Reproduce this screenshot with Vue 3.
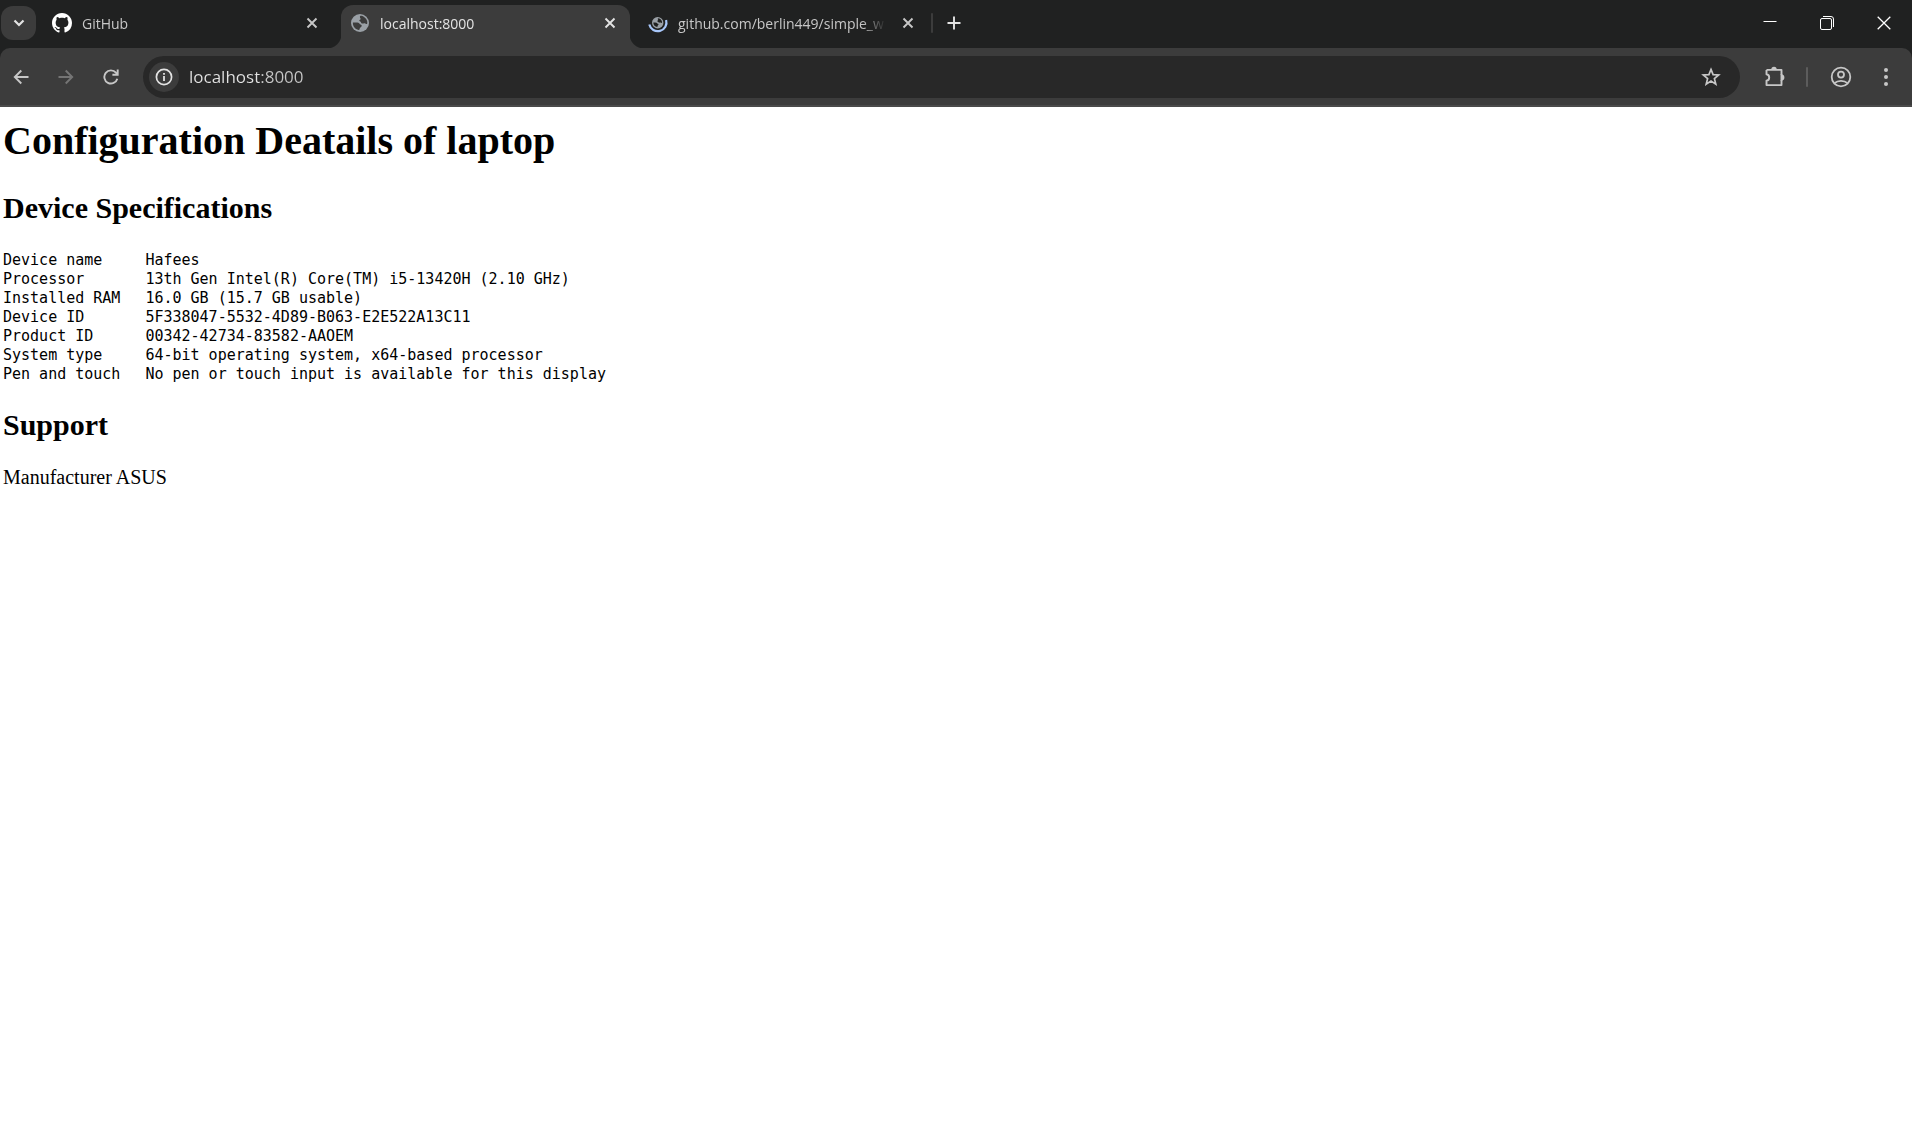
<script setup>
import { ref } from 'vue'

const address = ref('localhost:8000')

const tabs = [
  { title: 'GitHub', icon: 'github', active: false },
  { title: 'localhost:8000', icon: 'globe', active: true },
  { title: 'github.com/berlin449/simple_w', icon: 'loading', active: false },
]

const specs = [
  ['Device name', 'Hafees'],
  ['Processor', '13th Gen Intel(R) Core(TM) i5-13420H (2.10 GHz)'],
  ['Installed RAM', '16.0 GB (15.7 GB usable)'],
  ['Device ID', '5F338047-5532-4D89-B063-E2E522A13C11'],
  ['Product ID', '00342-42734-83582-AAOEM'],
  ['System type', '64-bit operating system, x64-based processor'],
  ['Pen and touch', 'No pen or touch input is available for this display'],
]
</script>

<template>
  <div class="browser">
    <header class="chrome">
      <div class="strip">
        <button class="search-tabs" aria-label="Search tabs">
          <svg width="12" height="8" viewBox="0 0 12 8"><path d="M1.5 1.5 6 6l4.5-4.5" fill="none" stroke="#e3e3e3" stroke-width="2.2" /></svg>
        </button>

        <div class="tabs">
          <div v-for="tab in tabs" :key="tab.title" class="tab" :class="{ active: tab.active }">
            <svg v-if="tab.icon === 'github'" width="20" height="20" viewBox="0 0 16 16">
              <path fill="#fff" d="M8 0C3.58 0 0 3.58 0 8c0 3.54 2.29 6.53 5.47 7.59.4.07.55-.17.55-.38 0-.19-.01-.82-.01-1.49-2.01.37-2.53-.49-2.69-.94-.09-.23-.48-.94-.82-1.13-.28-.15-.68-.52-.01-.53.63-.01 1.08.58 1.23.82.72 1.21 1.87.87 2.33.66.07-.52.28-.87.51-1.07-1.78-.2-3.64-.89-3.64-3.95 0-.87.31-1.59.82-2.15-.08-.2-.36-1.02.08-2.12 0 0 .67-.21 2.2.82.64-.18 1.32-.27 2-.27s1.36.09 2 .27c1.53-1.04 2.2-.82 2.2-.82.44 1.1.16 1.92.08 2.12.51.56.82 1.27.82 2.15 0 3.07-1.87 3.75-3.65 3.95.29.25.54.73.54 1.48 0 1.07-.01 1.93-.01 2.2 0 .21.15.46.55.38A8.01 8.01 0 0 0 16 8c0-4.42-3.58-8-8-8z" />
            </svg>
            <svg v-else-if="tab.icon === 'globe'" width="20" height="20" viewBox="0 0 20 20">
              <circle cx="10" cy="10" r="9" fill="#9aa0a6" />
              <path fill="#3c3c3c" d="M10.500 2.800c2.500 0 5.600 2 6.600 5.200.3 1.200.2 2.300 0 2.900-1 .2-1.500-.6-2.400-.7-1.300-.2-1.600.6-2.800.3-1.200-.5-.6-1.900-2-2.200-.9-.2-.7-1.300.1-1.500.8-.5.8-1.200.2-1.900-.5-.7-.3-1.800.3-2.100zM2.900 9.600c1.800 0 4.300-.2 5.500.2 1.300.4 1.100 1.500 2.200 1.800 1.300.3 1.500 1.700.5 2.300-.9.600-1.400.7-1.300 1.700 0 .7-.4 1.600-1.200 1.500C5 16.300 2.600 13.200 2.900 9.600z" />
            </svg>
            <svg v-else width="20" height="20" viewBox="0 0 20 20" overflow="visible">
              <circle cx="9.700" cy="9.700" r="5.700" fill="#9aa0a6" />
              <path fill="#202121" d="M10 5.200c1.800 0 3.500 1.300 4 3.300l-.1 1.500c-.8-.1-1-.5-1.700-.5-.9.200-1.300.2-1.800-.2-.4-.5-.5-.8-1.100-1-.4-.3-.2-.8.500-.9.400-.4.500-.6 0-1.100-.2-.5-.1-.9.200-1.100zM5.300 9.500c1.500 0 2.800 0 3.400.3.500.6.700.8 1.300 1 .8.400.7 1-.1 1.500-.4.500-.3 1-.6 1.700-2.200-.1-4-2-4-4.500z" />
              <path fill="none" stroke="#a8c7fa" stroke-width="2.200" d="M1.300 11.500A8.700 8.700 0 1 0 18.100 7" />
            </svg>
            <span class="title">{{ tab.title }}</span>
            <button class="close" aria-label="Close tab">
              <svg width="12" height="12" viewBox="0 0 12 12"><path d="m1.500 1.500 9 9m0-9-9 9" stroke="currentColor" stroke-width="1.900" /></svg>
            </button>
          </div>
        </div>

        <span class="divider tab-divider"></span>
        <button class="new-tab" aria-label="New tab">
          <svg width="14" height="14" viewBox="0 0 14 14"><path d="M7 .5v13M.5 7h13" stroke="#e3e3e3" stroke-width="1.900" /></svg>
        </button>

        <div class="window-controls">
          <button aria-label="Minimize"><svg width="14" height="14" viewBox="0 0 14 14"><path d="M.5 5.500h13" stroke="#fff" /></svg></button>
          <button aria-label="Restore">
            <svg width="14" height="14" viewBox="0 0 14 14" fill="none" stroke="#fff"><rect x=".5" y="2.500" width="11" height="11" rx="1.500" /><path d="M3 .5h8A2.500 2.500 0 0 1 13.500 3v8" /></svg>
          </button>
          <button aria-label="Close"><svg width="14" height="14" viewBox="0 0 14 14"><path d="m.7.7 12.600 12.600m0-12.600L.7 13.300" stroke="#fff" stroke-width="1.300" /></svg></button>
        </div>
      </div>

      <div class="toolbar">
        <nav class="nav">
          <button aria-label="Back"><svg width="16" height="16" viewBox="0 0 16 16"><path d="M15.500 8H2M8.300 1.500 1.800 8l6.500 6.500" fill="none" stroke="#c7c7c7" stroke-width="1.900" /></svg></button>
          <button aria-label="Forward" disabled><svg width="16" height="16" viewBox="0 0 16 16"><path d="M.5 8H14M7.700 1.500 14.200 8l-6.500 6.500" fill="none" stroke="#757575" stroke-width="1.900" /></svg></button>
          <button aria-label="Reload"><svg width="16" height="16" viewBox="0 0 16 16"><path d="M14.300 9.700A6.600 6.600 0 1 1 13 3.700l1.700 1.800M14.700.5v5.300H9.400" fill="none" stroke="#c7c7c7" stroke-width="1.900" /></svg></button>
        </nav>

        <div class="omnibox">
          <button class="site-info" aria-label="View site information">
            <svg width="18" height="18" viewBox="0 0 18 18"><circle cx="9" cy="9" r="7.600" fill="none" stroke="#e3e3e3" stroke-width="1.700" /><path d="M9 8v5M9 5v1.800" stroke="#e3e3e3" stroke-width="1.800" /></svg>
          </button>
          <input v-model="address" type="text" aria-label="Address and search bar" spellcheck="false" />
          <button class="star" aria-label="Bookmark this tab">
            <svg width="20" height="20" viewBox="0 0 20 20"><path d="m10 2.400 2.100 5.200 5.600.4-4.300 3.600 1.400 5.500-4.800-3-4.800 3 1.400-5.500L2.300 8l5.600-.4z" fill="none" stroke="#c7c7c7" stroke-width="1.700" /></svg>
          </button>
        </div>

        <div class="actions">
          <button aria-label="Extensions">
            <svg width="22" height="22" viewBox="0 0 22 22"><path d="M2.500 3.900h15v4.800M2.500 3.900v4.300c3.600.4 3.600 6 0 6.400v4.500h15v-4.800" fill="none" stroke="#c7c7c7" stroke-width="1.900" stroke-linejoin="round" /><path d="M7.300 3.500a2.700 2.700 0 0 1 5.400 0zM17.500 8.500a2.900 2.900 0 0 1 0 5.800z" fill="#c7c7c7" /><path d="M17.500 8v7" stroke="#c7c7c7" stroke-width="1.900" /></svg>
          </button>
          <span class="divider"></span>
          <button aria-label="Profile">
            <svg width="22" height="22" viewBox="0 0 22 22" fill="none" stroke="#c7c7c7" stroke-width="1.800"><circle cx="11" cy="11" r="9.300" /><circle cx="11" cy="8.600" r="3" /><path d="M4.500 17.200c3.300-3.200 9.700-3.200 13 0" /></svg>
          </button>
          <button aria-label="Menu">
            <svg width="6" height="20" viewBox="0 0 6 20" fill="#c7c7c7"><circle cx="3" cy="3" r="2" /><circle cx="3" cy="10" r="2" /><circle cx="3" cy="17" r="2" /></svg>
          </button>
        </div>
      </div>
    </header>

    <main class="page">
      <h1>Configuration Deatails of laptop</h1>
      <h2>Device Specifications</h2>
      <table>
        <tbody>
          <tr v-for="[name, value] in specs" :key="name">
            <th scope="row">{{ name }}</th>
            <td>{{ value }}</td>
          </tr>
        </tbody>
      </table>
      <h2>Support</h2>
      <p>Manufacturer ASUS</p>
    </main>
  </div>
</template>

<style>
body {
  margin: 0;
  background: #fff;
}
</style>

<style scoped>
.browser {
  min-height: 100vh;
  background: #fff;
}

.chrome {
  background: #202121;
  font-family: "Open Sans", "Noto Sans", sans-serif;
}

button {
  display: flex;
  flex: none;
  align-items: center;
  justify-content: center;
  padding: 0;
  border: 0;
  background: none;
}

svg {
  display: block;
  flex: none;
}

.strip {
  display: flex;
  align-items: flex-start;
  padding: 5px 0 0 1px;
}

.search-tabs {
  width: 35px;
  height: 34px;
  margin-top: 1px;
  border-radius: 12px;
  background: #3c3c3c;
}

.tabs {
  display: flex;
  gap: 9px;
  margin-left: 7px;
}

.tab {
  position: relative;
  display: flex;
  align-items: center;
  gap: 10px;
  box-sizing: border-box;
  width: 289px;
  height: 43px;
  padding: 0 8px 7px 9px;
  color: #c7c7c7;
}

.tab.active {
  border-radius: 12px 12px 0 0;
  background: #3c3c3c;
  color: #e3e3e3;
}

.tab.active::before,
.tab.active::after {
  position: absolute;
  bottom: 0;
  width: 14px;
  height: 14px;
  content: "";
}

.tab.active::before {
  right: 100%;
  background: radial-gradient(circle at 0 0, transparent 14px, #3c3c3c 15px);
}

.tab.active::after {
  left: 100%;
  background: radial-gradient(circle at 100% 0, transparent 14px, #3c3c3c 15px);
}

.title {
  flex: 1;
  min-width: 0;
  padding-top: 2px;
  overflow: hidden;
  font-size: 14px;
  line-height: 20px;
  white-space: nowrap;
  mask-image: linear-gradient(to right, #000 calc(100% - 24px), transparent);
}

.close {
  width: 24px;
  height: 24px;
  color: inherit;
}

.divider {
  flex: none;
  width: 2px;
  height: 20px;
  border-radius: 1px;
  background: #5c5c5c;
}

.tab-divider {
  margin: 8px 0 0 3px;
  background: #3c3c3c;
}

.new-tab {
  width: 34px;
  height: 36px;
  margin-left: 4px;
}

.window-controls {
  display: flex;
  margin-left: auto;
}

.window-controls button {
  width: 57px;
  height: 36px;
}

.toolbar {
  display: flex;
  align-items: center;
  padding: 8px 0 7px;
  border-bottom: 2px solid #4a4a4a;
  border-radius: 10px 10px 0 0;
  background: #3c3c3c;
}

.nav {
  display: flex;
  gap: 4px;
}

.nav button {
  width: 41px;
  height: 40px;
}

.omnibox {
  display: flex;
  flex: 1;
  align-items: center;
  box-sizing: border-box;
  height: 42px;
  margin-left: 12px;
  padding: 0 9px 0 6px;
  border-radius: 21px;
  background: #282828;
}

.site-info {
  width: 30px;
  height: 30px;
  border-radius: 50%;
  background: #3c3c3c;
}

.omnibox input {
  flex: 1;
  min-width: 0;
  height: 24px;
  margin-left: 10px;
  padding: 0;
  border: 0;
  outline: 0;
  background: linear-gradient(to right, #e3e3e3 70px, #c7c7c7 70px);
  background-clip: text;
  color: transparent;
  font: 17px/24px "Open Sans", "Noto Sans", sans-serif;
}

.star {
  width: 40px;
  height: 36px;
}

.actions {
  display: flex;
  align-items: center;
  padding: 0 6px 0 15px;
}

.actions button {
  width: 40px;
  height: 40px;
}

.actions .divider {
  margin: 0 13px 0 11px;
}

.actions button:last-child {
  margin-left: 5px;
}

.page {
  padding: 11px 3px;
  color: #000;
  font-family: "Liberation Serif", "Times New Roman", serif;
  font-size: 20px;
  line-height: 23px;
}

h1 {
  margin: 0 0 27px;
  font-size: 40px;
  line-height: 46px;
}

h2 {
  margin: 24px 0;
  font-size: 30px;
  line-height: 34px;
}

p {
  margin: 0;
}

table {
  margin-top: 26px;
  border-collapse: collapse;
  font-family: "DejaVu Sans Mono", "Liberation Mono", monospace;
  font-size: 15px;
  line-height: 19px;
}

th,
td {
  padding: 0;
  font-weight: 400;
  text-align: left;
  white-space: nowrap;
}

th {
  padding-right: 25px;
}
</style>
